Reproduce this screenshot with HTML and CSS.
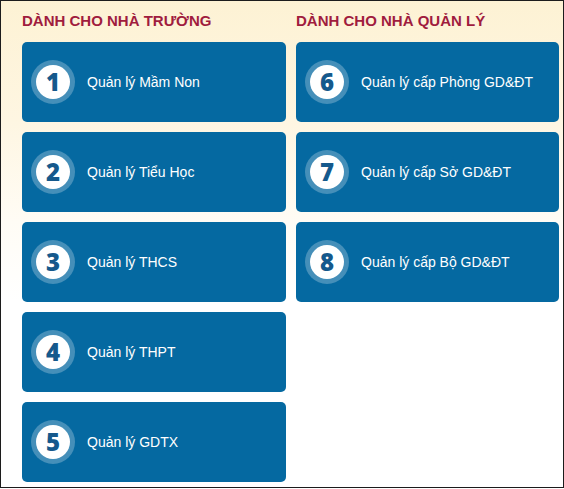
FILE: index.html
```html
<!DOCTYPE html>
<html lang="vi">
<head>
<meta charset="utf-8">
<title>Dành cho nhà trường</title>
<link rel="stylesheet" href="styles.css">
</head>
<body>
<div class="frame">
  <section class="col">
    <h2 class="heading">DÀNH CHO NHÀ TRƯỜNG</h2>
    <a class="card" href="#"><span class="num">1</span><span class="label">Quản lý Mầm Non</span></a>
    <a class="card" href="#"><span class="num">2</span><span class="label">Quản lý Tiểu Học</span></a>
    <a class="card" href="#"><span class="num">3</span><span class="label">Quản lý THCS</span></a>
    <a class="card" href="#"><span class="num">4</span><span class="label">Quản lý THPT</span></a>
    <a class="card" href="#"><span class="num">5</span><span class="label">Quản lý GDTX</span></a>
  </section>
  <section class="col">
    <h2 class="heading">DÀNH CHO NHÀ QUẢN LÝ</h2>
    <a class="card" href="#"><span class="num">6</span><span class="label">Quản lý cấp Phòng GD&amp;ĐT</span></a>
    <a class="card" href="#"><span class="num">7</span><span class="label">Quản lý cấp Sở GD&amp;ĐT</span></a>
    <a class="card" href="#"><span class="num">8</span><span class="label">Quản lý cấp Bộ GD&amp;ĐT</span></a>
  </section>
</div>
</body>
</html>
```
FILE: styles.css
```css
html, body {
  margin: 0;
  padding: 0;
  background: #ffffff;
}
body {
  font-family: "Liberation Sans", Arial, sans-serif;
}
.frame {
  box-sizing: border-box;
  width: 564px;
  height: 488px;
  border: 1px solid #1c1c1c;
  background: linear-gradient(to bottom, #fdf2d4 0px, #fef6e2 120px, #fffcf5 220px, #ffffff 300px);
  padding: 10px 0 0 21px;
  display: grid;
  grid-template-columns: 264px 263px;
  column-gap: 10px;
  align-items: start;
}
.col {
  display: flex;
  flex-direction: column;
  gap: 10px;
}
.heading {
  margin: 0 0 1px 0;
  font-size: 15px;
  line-height: 20px;
  font-weight: bold;
  color: #a01c3e;
}
.card {
  display: flex;
  align-items: center;
  height: 80px;
  box-sizing: border-box;
  padding-left: 14px;
  background: #0569a1;
  border-radius: 5px;
  text-decoration: none;
}
.num {
  flex: none;
  width: 34px;
  height: 34px;
  border-radius: 50%;
  background: #ffffff;
  box-shadow: 0 0 0 5px rgba(255, 255, 255, 0.26);
  display: flex;
  align-items: center;
  justify-content: center;
  font-family: "Open Sans", "Liberation Sans", sans-serif;
  font-weight: 800;
  font-size: 24px;
  line-height: 1;
  color: #15598c;
}
.label {
  margin-left: 17px;
  font-size: 14px;
  color: #ffffff;
}
```
